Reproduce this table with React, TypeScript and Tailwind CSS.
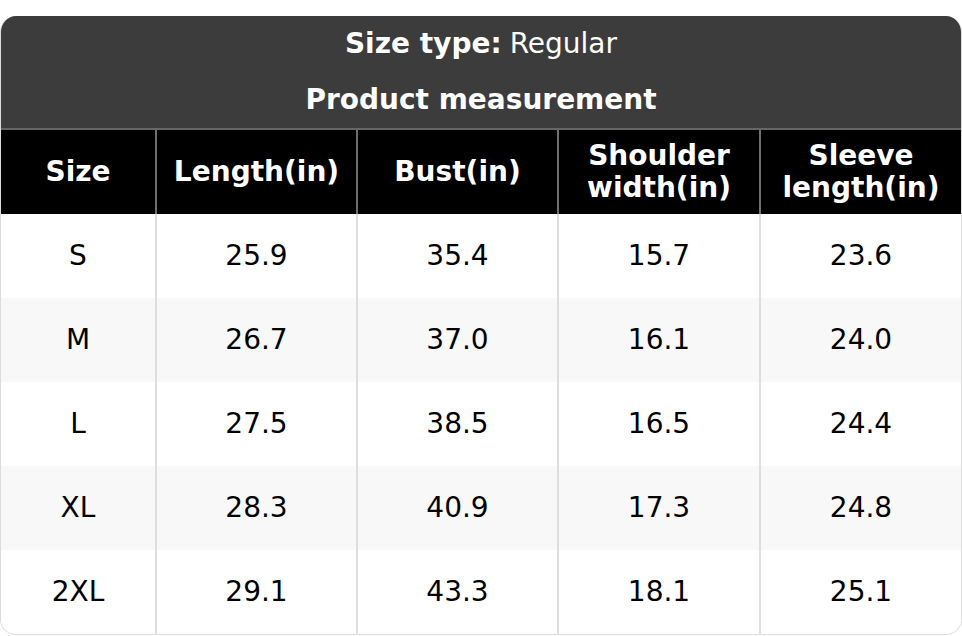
import React from 'react';

const columns = ['Size', 'Length(in)', 'Bust(in)', 'Shoulder width(in)', 'Sleeve length(in)'];

const rows: string[][] = [
  ['S', '25.9', '35.4', '15.7', '23.6'],
  ['M', '26.7', '37.0', '16.1', '24.0'],
  ['L', '27.5', '38.5', '16.5', '24.4'],
  ['XL', '28.3', '40.9', '17.3', '24.8'],
  ['2XL', '29.1', '43.3', '18.1', '25.1'],
];

const headLabels: React.ReactNode[] = [
  'Size',
  'Length(in)',
  'Bust(in)',
  <>Shoulder<br />width(in)</>,
  <>Sleeve<br />length(in)</>,
];

const App: React.FC = () => {
  return (
    <div className="w-[962px] h-[636px] bg-white pt-4" style={{ fontFamily: '"DejaVu Sans", sans-serif' }}>
      <div className="rounded-2xl overflow-hidden border-x border-b border-[#dcdcdc] bg-white">
        <div className="bg-[#3c3c3c] text-white text-center h-[114px] flex flex-col border-b-2 border-[#666]">
          <div className="h-[56px] flex items-center justify-center text-[28px]">
            <span className="font-bold">Size type:</span>
            <span className="ml-2">Regular</span>
          </div>
          <div className="h-[56px] flex items-center justify-center text-[28px] font-bold">
            Product measurement
          </div>
        </div>
        <table className="w-full border-collapse table-fixed text-[28px]">
          <colgroup>
            <col className="w-[155px]" />
            <col className="w-[201px]" />
            <col className="w-[201px]" />
            <col className="w-[202px]" />
            <col />
          </colgroup>
          <thead>
            <tr className="bg-black text-white h-[84px]">
              {headLabels.map((label, i) => (
                <th
                  key={columns[i]}
                  className={`font-bold leading-[32px] text-center align-middle ${i > 0 ? 'border-l-2 border-[#6e6e6e]' : ''}`}
                >
                  {label}
                </th>
              ))}
            </tr>
          </thead>
          <tbody>
            {rows.map((row, r) => (
              <tr key={row[0]} className={`h-[84px] ${r % 2 === 1 ? 'bg-[#f8f8f8]' : 'bg-white'}`}>
                {row.map((cell, i) => (
                  <td
                    key={i}
                    className={`text-center align-middle text-black ${i > 0 ? 'border-l-2 border-[#dedede]' : ''}`}
                  >
                    {cell}
                  </td>
                ))}
              </tr>
            ))}
          </tbody>
        </table>
      </div>
    </div>
  );
};

export default App;
